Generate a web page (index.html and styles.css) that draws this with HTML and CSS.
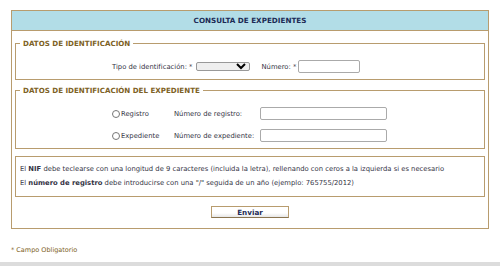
FILE: index.html
```html
<!DOCTYPE html>
<html lang="es">
<head>
    <meta charset="UTF-8">
    <title>Consulta de expedientes</title>
    <link rel="stylesheet" href="styles.css">
</head>
<body>
<div class="panel">
    <div class="panel-title">CONSULTA DE EXPEDIENTES</div>
    <div class="panel-body">
        <fieldset class="group">
            <legend>DATOS DE IDENTIFICACIÓN</legend>
            <div class="row-ident">
                <label>Tipo de identificación: *</label>
                <select class="sel-tipo"><option></option></select>
                <label class="lbl-num">Número: *</label>
                <input type="text" class="inp-num">
            </div>
        </fieldset>
        <fieldset class="group group-exp">
            <legend>DATOS DE IDENTIFICACIÓN DEL EXPEDIENTE</legend>
            <div class="row-exp">
                <span class="radio"><input type="radio" name="tipo">Registro</span>
                <label>Número de registro:</label>
                <input type="text" class="inp-long">
            </div>
            <div class="row-exp">
                <span class="radio"><input type="radio" name="tipo">Expediente</span>
                <label>Número de expediente:</label>
                <input type="text" class="inp-long">
            </div>
        </fieldset>
        <div class="info">
            <p>El <b>NIF</b> debe teclearse con una longitud de 9 caracteres (incluida la letra), rellenando con ceros a la izquierda si es necesario</p>
            <p>El <b>número de registro</b> debe introducirse con una "/" seguida de un año (ejemplo: 765755/2012)</p>
        </div>
        <div class="actions">
            <button class="btn">Enviar</button>
        </div>
    </div>
</div>
<p class="note">* Campo Obligatorio</p>
<div class="bottom-bar"></div>
</body>
</html>
```

FILE: styles.css
```css
body { margin: 0; padding: 10px 0 0; font-family: "DejaVu Sans", Verdana, sans-serif; font-size: 6.8px; color: #333344; background: #fff; }
.panel { margin: 0 11px; border: 1px solid #b89c6e; }
.panel-title { background: #b2dde7; border-bottom: 1px solid #b89c6e; height: 19px; line-height: 19px; text-align: center; font-weight: bold; color: #1b2a55; font-size: 7.2px; }
.panel-body { padding: 2px 3px 10px; }
.group { border: 1px solid #b89c6e; margin: 6px 0 0; padding: 0 0 6px; }
.group legend { font-weight: bold; color: #7d6124; padding: 0 3px; margin-left: 4px; font-size: 7.1px; }
.row-ident { display: flex; align-items: center; padding: 12px 0 0 96px; }
.sel-tipo { width: 54px; height: 9px; margin-left: 3px; font-size: 5px; padding: 0; border: 1px solid #999; border-radius: 2px; }
.lbl-num { margin-left: 12px; }
.inp-num { width: 62px; height: 13px; margin-left: 2px; box-sizing: border-box; border: 1px solid #aaa; border-radius: 2px; padding: 0; }
.group-exp { padding-bottom: 6px; }
.row-exp { display: flex; align-items: center; padding: 12px 0 0 96px; }
.row-exp + .row-exp { padding-top: 9px; }
.radio { display: flex; align-items: center; width: 62px; }
.radio input { margin: 0 1px 0 0; width: 8px; height: 8px; }
.row-exp label { width: 86px; }
.inp-long { width: 127px; height: 13px; box-sizing: border-box; border: 1px solid #aaa; border-radius: 2px; padding: 0; }
.info { border: 1px solid #b89c6e; margin-top: 7px; padding: 5px 4px 6px; }
.info p { margin: 0; line-height: 14px; }
.actions { text-align: center; padding-top: 9px; }
.btn { width: 78px; height: 12px; padding: 0; font-family: inherit; font-size: 7.2px; font-weight: bold; color: #1b2a55; background: linear-gradient(#fff 60%, #e6e6e6); border: 1px solid #b89c6e; border-bottom-color: #8a7450; }
.note { margin: 17px 11px 0; color: #7d6124; font-size: 6.5px; }
.bottom-bar { margin-top: 8px; height: 5px; background: #dcdcdc; }
```
